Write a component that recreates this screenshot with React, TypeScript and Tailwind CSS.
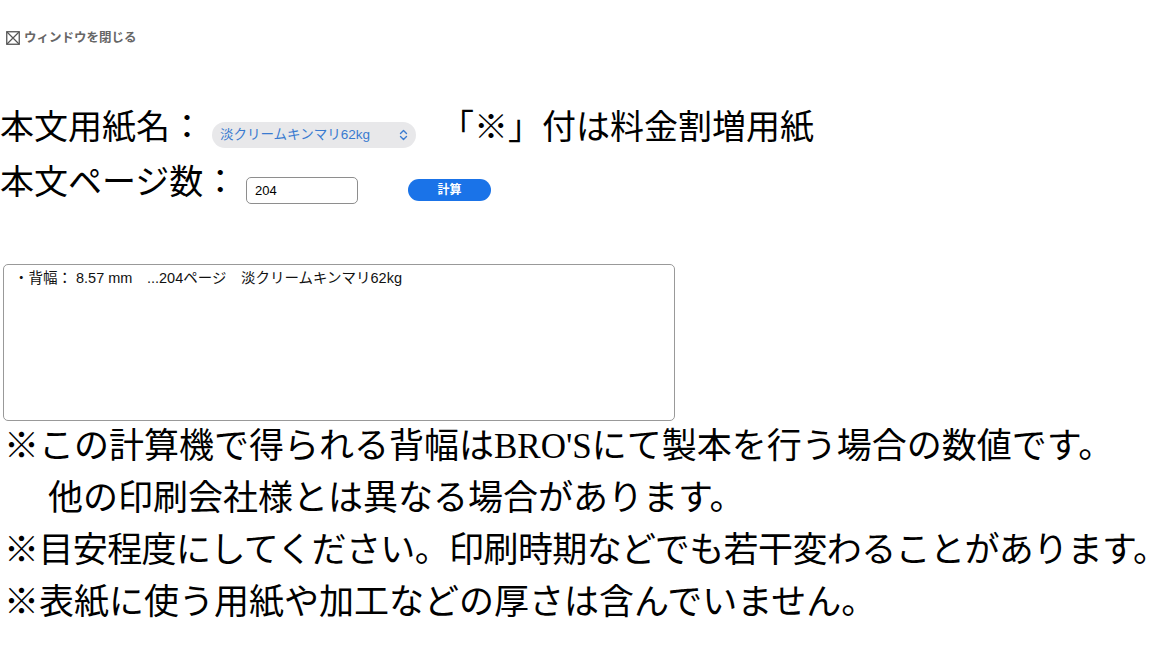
import React from "react";

const serif = { fontFamily: '"Liberation Serif", "Noto Sans CJK JP", serif' };
const sans = { fontFamily: '"Liberation Sans", "Noto Sans CJK JP", sans-serif' };

export default function App() {
  return (
    <div className="w-[1170px] h-[664px] bg-white text-black overflow-hidden">
      <div className="pt-[31px] pl-[6px] flex items-center gap-[4px] h-[45px]" style={sans}>
        <svg width="14" height="14" viewBox="0 0 14 14" className="text-[#555]">
          <rect x="0.75" y="0.75" width="12.5" height="12.5" fill="none" stroke="currentColor" strokeWidth="1.3" />
          <path d="M1 1 L13 13 M13 1 L1 13" stroke="currentColor" strokeWidth="1.2" />
        </svg>
        <span className="text-[12.5px] font-bold text-[#666] leading-[14px]">ウィンドウを閉じる</span>
      </div>

      <div className="mt-[55px]" style={serif}>
        <div className="flex items-start h-[55px]">
          <div className="w-[212px] text-[34px] leading-[55px] whitespace-nowrap">本文用紙名：</div>
          <div className="mt-[22px] w-[204px] h-[26px] rounded-full bg-[#e8e8ea] flex items-center justify-between pl-[8px] pr-[8px]" style={sans}>
            <span className="text-[13.5px] text-[#3a7bd0]">淡クリームキンマリ62kg</span>
            <svg width="9" height="12" viewBox="0 0 9 12">
              <path d="M1.5 4.5 L4.5 1.5 L7.5 4.5 M1.5 7.5 L4.5 10.5 L7.5 7.5" fill="none" stroke="#3a7bd0" strokeWidth="1.4" strokeLinecap="round" strokeLinejoin="round" />
            </svg>
          </div>
          <div className="ml-[24px] text-[34px] leading-[55px] whitespace-nowrap">「※」付は料金割増用紙</div>
        </div>
        <div className="flex items-start h-[55px]">
          <div className="w-[246px] text-[34px] leading-[55px] whitespace-nowrap">本文ページ数：</div>
          <div className="mt-[22px] w-[112px] h-[27px] rounded-[5px] border border-[#8e8e8e] flex items-center pl-[8px]" style={sans}>
            <span className="text-[13px] text-black">204</span>
          </div>
          <div className="mt-[24px] ml-[50px] w-[83px] h-[22px] rounded-full bg-[#1a73e8] flex items-center justify-center" style={sans}>
            <span className="text-[12px] font-bold text-white">計算</span>
          </div>
        </div>
      </div>

      <div className="mt-[54px] ml-[3px] w-[672px] h-[157px] rounded-[5px] border border-[#999] px-[10px] pt-[4px]" style={sans}>
        <div className="text-[14.5px] leading-[18px] text-[#111] whitespace-pre">・背幅： 8.57 mm　...204ページ　淡クリームキンマリ62kg</div>
      </div>

      <div className="pl-[4px] text-[35px] leading-[52px]" style={serif}>
        <div className="whitespace-nowrap">※この計算機で得られる背幅はBRO'Sにて製本を行う場合の数値です。</div>
        <div className="whitespace-nowrap pl-[44px]">他の印刷会社様とは異なる場合があります。</div>
        <div className="whitespace-nowrap tracking-[-0.6px]">※目安程度にしてください。印刷時期などでも若干変わることがあります。</div>
        <div className="whitespace-nowrap">※表紙に使う用紙や加工などの厚さは含んでいません。</div>
      </div>
    </div>
  );
}
